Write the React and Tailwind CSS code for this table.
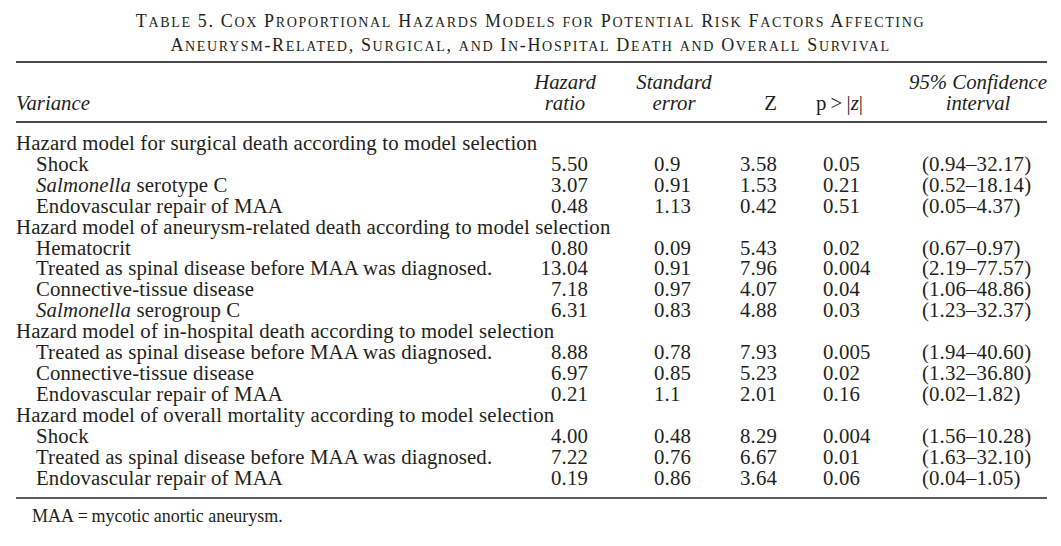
const groups = [
  {
    title: 'Hazard model for surgical death according to model selection',
    rows: [
      ['Shock', '5.50', '0.9', '3.58', '0.05', '(0.94–32.17)'],
      [<><i>Salmonella</i> serotype C</>, '3.07', '0.91', '1.53', '0.21', '(0.52–18.14)'],
      ['Endovascular repair of MAA', '0.48', '1.13', '0.42', '0.51', '(0.05–4.37)'],
    ],
  },
  {
    title: 'Hazard model of aneurysm-related death according to model selection',
    rows: [
      ['Hematocrit', '0.80', '0.09', '5.43', '0.02', '(0.67–0.97)'],
      ['Treated as spinal disease before MAA was diagnosed.', '13.04', '0.91', '7.96', '0.004', '(2.19–77.57)'],
      ['Connective-tissue disease', '7.18', '0.97', '4.07', '0.04', '(1.06–48.86)'],
      [<><i>Salmonella</i> serogroup C</>, '6.31', '0.83', '4.88', '0.03', '(1.23–32.37)'],
    ],
  },
  {
    title: 'Hazard model of in-hospital death according to model selection',
    rows: [
      ['Treated as spinal disease before MAA was diagnosed.', '8.88', '0.78', '7.93', '0.005', '(1.94–40.60)'],
      ['Connective-tissue disease', '6.97', '0.85', '5.23', '0.02', '(1.32–36.80)'],
      ['Endovascular repair of MAA', '0.21', '1.1', '2.01', '0.16', '(0.02–1.82)'],
    ],
  },
  {
    title: 'Hazard model of overall mortality according to model selection',
    rows: [
      ['Shock', '4.00', '0.48', '8.29', '0.004', '(1.56–10.28)'],
      ['Treated as spinal disease before MAA was diagnosed.', '7.22', '0.76', '6.67', '0.01', '(1.63–32.10)'],
      ['Endovascular repair of MAA', '0.19', '0.86', '3.64', '0.06', '(0.04–1.05)'],
    ],
  },
];

const cols = 'grid grid-cols-[504px_90px_128px_52px_117px_140px]';

// small caps by hand: lowercase runs are uppercased at a smaller size
function SmallCaps({ text }) {
  const parts = text.match(/[a-z]+|[^a-z]+/g);
  return parts.map((p, i) =>
    /[a-z]/.test(p) ? (
      <span key={i} className="text-[0.78em] uppercase">{p}</span>
    ) : (
      <span key={i}>{p}</span>
    )
  );
}

function Row({ cells }) {
  const [label, hr, se, z, p, ci] = cells;
  return (
    <div className={`${cols} leading-[20.9px] whitespace-nowrap`}>
      <div className="pl-[20px]">{label}</div>
      <div className="text-right pr-[22px]">{hr}</div>
      <div className="pl-[44px]">{se}</div>
      <div className="text-right pr-[13px]">{z}</div>
      <div className="pl-[33px]">{p}</div>
      <div className="pl-[15px]">{ci}</div>
    </div>
  );
}

export default function App() {
  return (
    <div className="w-[1061px] h-[546px] bg-white text-[#231f20] font-['Liberation_Serif',serif] overflow-hidden">
      <div className="pt-[10px] text-center text-[18px] leading-[23px] tracking-[1.65px]">
        <div><SmallCaps text="Table 5. Cox Proportional Hazards Models for Potential Risk Factors Affecting" /></div>
        <div><SmallCaps text="Aneurysm-Related, Surgical, and In-Hospital Death and Overall Survival" /></div>
      </div>

      <div className="mx-[16px] mt-[3px] w-[1031px]">
        <div className="h-[2px] bg-[#4a4a4a]" />

        <div className={`${cols} pt-[8px] pb-[8px] text-[20.8px] leading-[21px] italic whitespace-nowrap`}>
          <div className="flex items-end">Variance</div>
          <div className="text-center">Hazard<br />ratio</div>
          <div className="text-center">Standard<br />error</div>
          <div className="flex items-end justify-end pr-[13px] not-italic">Z</div>
          <div className="flex items-end pl-[26px] not-italic">
            p{'\u2009'}&gt;{'\u2009'}|<i>z</i>|
          </div>
          <div className="text-center pl-[2px]">95% Confidence<br />interval</div>
        </div>

        <div className="h-[2px] bg-[#4a4a4a]" />

        <div className="pt-[10px] pb-[9px] text-[20.8px] tracking-[0.15px]">
          {groups.map((g, gi) => (
            <div key={gi}>
              <div className="leading-[20.9px] whitespace-nowrap">{g.title}</div>
              {g.rows.map((r, ri) => (
                <Row key={ri} cells={r} />
              ))}
            </div>
          ))}
        </div>

        <div className="h-[2px] bg-[#5a5a5a]" />

        <div className="pt-[7px] pl-[16px] text-[18px] leading-[20px]">
          MAA{'\u2009'}={'\u2009'}mycotic anortic aneurysm.
        </div>
      </div>
    </div>
  );
}
